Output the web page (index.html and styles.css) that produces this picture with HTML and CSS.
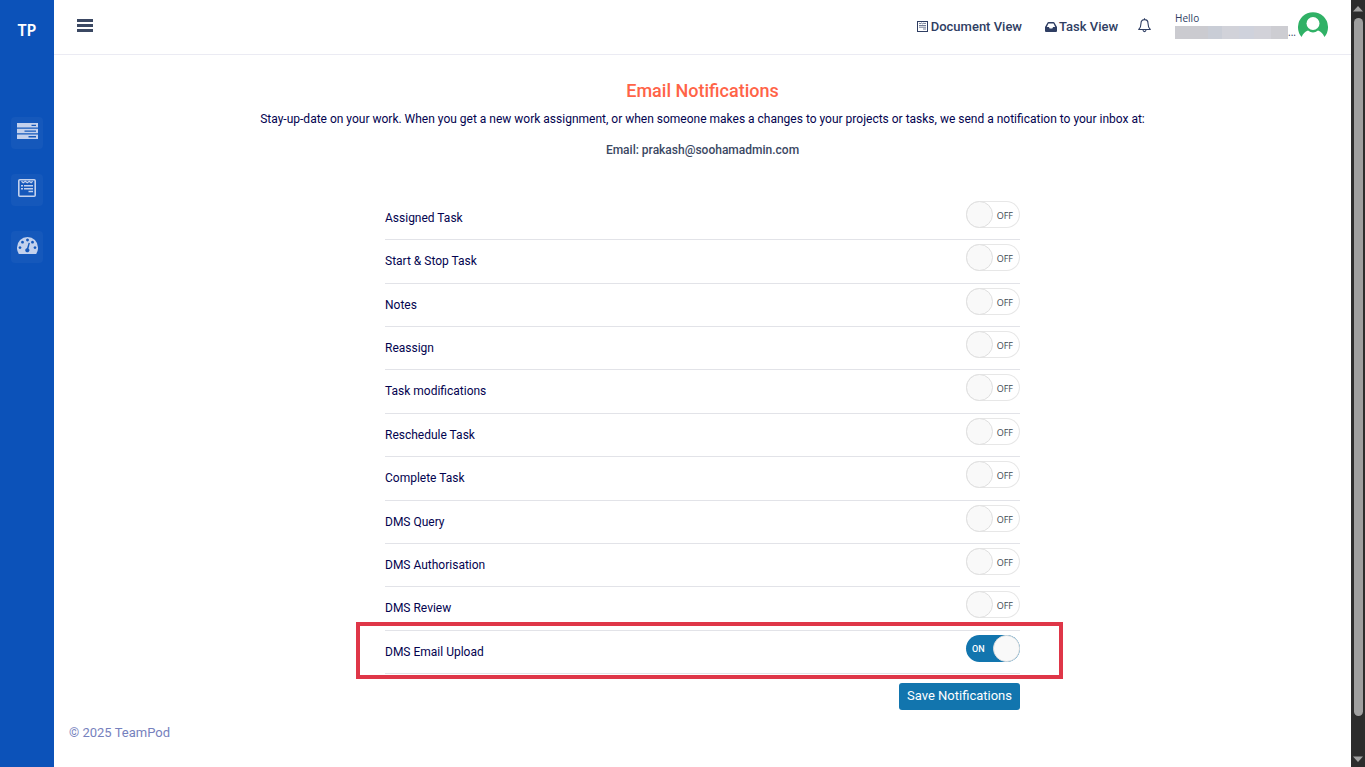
FILE: index.html
```
<!DOCTYPE html>
<html lang="en">
<head>
<meta charset="utf-8">
<meta name="viewport" content="width=device-width, initial-scale=1">
<title>Email Notifications - TeamPod</title>
<link rel="stylesheet" href="styles.css">
</head>
<body>
<div class="app">
  <nav class="sidebar" aria-label="Main">
    <a class="brand" href="#">TP</a>
    <a class="side-link" href="#" aria-label="Tasks">
      <svg width="21" height="16" viewBox="0 0 21 16" fill="currentColor" fill-rule="evenodd"><path d="M0 0h21v4.6H0zM14.500 1.800v1.200h4.500V1.800zM0 5.800h21v4.400H0zM7.500 7.400v1.300h11.500V7.400zM0 11.500h21V16H0zM11.500 13.100v1.300h7.500v-1.300z"/></svg>
    </a>
    <a class="side-link" href="#" aria-label="Documents">
      <svg width="18" height="18" viewBox="0 0 18 18" fill="none" stroke="currentColor"><rect x=".8" y=".8" width="16.400" height="16.400" rx="1" stroke-width="1.600"/><path d="M3.500 2.200l1.700 1.500 2.100-1.500 1.900 1.500 2.100-1.500 1.800 1.500 1.500-1.500" stroke-width="1.300"/><path d="M3 6.800h2m1 0h9M3 9.700h2m1 0h9M10.500 12.500H15" stroke-width="1.500"/></svg>
    </a>
    <a class="side-link" href="#" aria-label="Dashboard">
      <svg width="21" height="17" viewBox="0 0 21 17" fill="currentColor" fill-rule="evenodd"><path d="M1.800 17A10.400 10.400 0 0 1 0 10.500a10.500 10.500 0 0 1 21 0 10.400 10.400 0 0 1-1.800 6.500zM10.500 1.600a1.400 1.400 0 1 0 .01 0zM5.500 3.800a1.400 1.400 0 1 0 .01 0zM15.500 3.800a1.400 1.400 0 1 0 .01 0zM3 9.200a1.400 1.400 0 1 0 .01 0zM18 9.200a1.400 1.400 0 1 0 .01 0zM11.600 5.700L10 11.200a2.100 2.100 0 1 0 1.500.3L12.900 6z"/></svg>
    </a>
  </nav>

  <div class="page">
    <header class="topbar">
      <button class="menu-btn" type="button" aria-label="Toggle menu">
        <svg width="16" height="13" viewBox="0 0 16 13" fill="currentColor"><path d="M0 0h16v3H0zM0 5h16v3H0zM0 10h16v3H0z"/></svg>
      </button>
      <div class="top-links">
        <a class="top-link" href="#">
          <svg width="11" height="11" viewBox="0 0 11 11" fill="none" stroke="currentColor"><rect x=".5" y=".5" width="10" height="10"/><path d="M2 2l1 .8L4.500 2l1 .8L7 2l1 .8L9 2M2 4.500h7M2 6.200h7M6 8h3" stroke-width=".9" opacity=".75"/></svg>
          Document View</a>
        <a class="top-link" href="#">
          <svg width="12" height="10" viewBox="0 0 12 10" fill="currentColor" fill-rule="evenodd"><path d="M2.600.6Q2.900 0 3.500 0h5q.6 0 .9.600L12 5v4q0 1-1 1H1Q0 10 0 9V5zM3.500 1.500L1.800 5h2.100l.8 1.500h2.600L8.100 5h2.100L8.500 1.500z"/></svg>
          Task View</a>
        <button class="bell" type="button" aria-label="Alerts">
          <svg width="13" height="15" viewBox="0 0 13 15" fill="none" stroke="currentColor" stroke-width="1.100" stroke-linejoin="round"><path d="M6.500.3v1.400M6.500 1.600C4.200 1.600 3 3.200 3 5.200c0 3.500-.9 5-2.300 6.300h11.600C10.900 10.200 10 8.700 10 5.200c0-2-1.200-3.600-3.500-3.600zM5 12q.2 1.600 1.500 1.600T8 12"/></svg>
        </button>
        <div class="user">
          <span>Hello</span>
          <span class="user-name"><span class="redacted"></span>...</span>
        </div>
        <a class="avatar" href="#" aria-label="Profile">
          <svg width="30" height="26" viewBox="0 0 30 26"><path fill="#30b166" d="M3.600 25A15 15 0 1 1 26.400 25Q24.500 20 20 18.500Q15 22.500 10 18.500Q5.500 20 3.600 25z"/><circle cx="15" cy="11.500" r="6.500" fill="#fff"/></svg>
        </a>
      </div>
    </header>

    <main class="content">
      <h1>Email Notifications</h1>
      <p class="intro">Stay-up-date on your work. When you get a new work assignment, or when someone makes a changes to your projects or tasks, we send a notification to your inbox at:</p>
      <p class="email">Email: prakash@soohamadmin.com</p>
      <form class="settings">
        <div class="rows">
          <div class="row"><label for="n1">Assigned Task</label><span class="switch"><input type="checkbox" id="n1"><span class="state">OFF</span></span></div>
          <div class="row"><label for="n2">Start &amp; Stop Task</label><span class="switch"><input type="checkbox" id="n2"><span class="state">OFF</span></span></div>
          <div class="row"><label for="n3">Notes</label><span class="switch"><input type="checkbox" id="n3"><span class="state">OFF</span></span></div>
          <div class="row"><label for="n4">Reassign</label><span class="switch"><input type="checkbox" id="n4"><span class="state">OFF</span></span></div>
          <div class="row"><label for="n5">Task modifications</label><span class="switch"><input type="checkbox" id="n5"><span class="state">OFF</span></span></div>
          <div class="row"><label for="n6">Reschedule Task</label><span class="switch"><input type="checkbox" id="n6"><span class="state">OFF</span></span></div>
          <div class="row"><label for="n7">Complete Task</label><span class="switch"><input type="checkbox" id="n7"><span class="state">OFF</span></span></div>
          <div class="row"><label for="n8">DMS Query</label><span class="switch"><input type="checkbox" id="n8"><span class="state">OFF</span></span></div>
          <div class="row"><label for="n9">DMS Authorisation</label><span class="switch"><input type="checkbox" id="n9"><span class="state">OFF</span></span></div>
          <div class="row"><label for="n10">DMS Review</label><span class="switch"><input type="checkbox" id="n10"><span class="state">OFF</span></span></div>
          <div class="row highlighted"><label for="n11">DMS Email Upload</label><span class="switch"><input type="checkbox" id="n11" checked><span class="state on">ON</span></span></div>
        </div>
        <button class="save" type="button">Save Notifications</button>
      </form>
    </main>
    <footer class="footer">© 2025 TeamPod</footer>
  </div>

  <div class="scrollbar" aria-hidden="true">
    <svg width="10" height="6" viewBox="0 0 10 6"><path fill="#9f9f9f" d="M5 0l5 5.500H0z"/></svg>
    <div class="thumb-track"><div class="thumb"></div></div>
    <svg width="10" height="6" viewBox="0 0 10 6"><path fill="#9f9f9f" d="M0 .5h10L5 6z"/></svg>
  </div>
</div>
</body>
</html>
```
FILE: styles.css
```
*, *::before, *::after { box-sizing: border-box; }

body {
  margin: 0;
  font-family: Roboto, "Liberation Sans", sans-serif;
  font-size: 12px;
  line-height: 18px;
  color: #03034f;
  background: #fff;
}

a { color: inherit; text-decoration: none; }
button { font: inherit; color: inherit; border: 0; padding: 0; background: none; cursor: pointer; }
svg { display: block; flex: none; }

.app { display: flex; min-height: 100vh; }

.sidebar {
  flex: 0 0 54px;
  display: flex;
  flex-direction: column;
  align-items: center;
  padding-top: 20px;
  background: #0c52b9;
}
.brand {
  margin-bottom: 77px;
  font: 600 16px/20px "Noto Sans", sans-serif;
  color: #fff;
}
.side-link {
  display: flex;
  align-items: center;
  justify-content: center;
  width: 32px;
  height: 32px;
  margin-bottom: 25px;
  border-radius: 4px;
  background: #1558bb;
  color: #c3d1ed;
}
.side-link svg { margin-bottom: 4px; }

.page { flex: 1; min-width: 0; display: flex; flex-direction: column; }

.topbar {
  display: flex;
  align-items: center;
  justify-content: space-between;
  height: 55px;
  padding: 0 23px 3px;
  border-bottom: 1px solid #ebebf3;
  color: #2f3e63;
}
.menu-btn { color: #3b4863; }
.top-links { display: flex; align-items: center; }
.top-link {
  display: flex;
  align-items: center;
  gap: 3px;
  margin-right: 23px;
  padding-top: 2px;
  font-size: 13px;
  font-weight: 500;
}
.top-link + .top-link { margin-right: 20px; gap: 2px; }
.bell { margin-right: 24px; }
.user {
  display: flex;
  flex-direction: column;
  margin-bottom: 2px;
  font: 10px/14px "Open Sans", sans-serif;
}
.user-name { display: flex; align-items: flex-end; }
.redacted {
  width: 113px;
  height: 13px;
  background: linear-gradient(90deg, #cbcbd0 0 29%, #c9cdd6 29% 42%, #d1d2d9 42% 57%, #cfd2dc 57% 70%, #d2d2d9 70% 85%, #cdcdd2 85%);
}
.avatar { margin-left: 2px; margin-bottom: 1px; }

.content { padding: 26px 20px 0; text-align: center; }
h1 {
  margin: 0 0 9px;
  font-size: 18px;
  line-height: 20px;
  font-weight: 500;
  color: #ff6347;
}
.intro { margin: 0 0 13px; }
.email { margin: 0 0 38px; font-weight: 500; color: #3b4863; }

.settings {
  display: flex;
  flex-direction: column;
  max-width: 635px;
  margin: 0 auto;
}
.rows {
  display: grid;
  grid-auto-rows: 1fr;
  min-height: 477px;
}
.row {
  position: relative;
  display: flex;
  align-items: flex-start;
  justify-content: space-between;
  padding: 4px 0;
  border-bottom: 1px solid #e2e3e8;
}
.row label { padding-top: 8px; }
.highlighted::after {
  content: "";
  position: absolute;
  inset: -9px -43px -6px -29px;
  border: 4px solid #df3648;
  pointer-events: none;
}

.switch { position: relative; width: 54px; height: 27px; }
.switch input {
  appearance: none;
  display: flex;
  width: 100%;
  height: 100%;
  margin: 0;
  border-radius: 14px;
  background: #fff;
  box-shadow: inset 0 0 0 1px #e7e7e7;
  cursor: pointer;
}
.switch input::before {
  content: "";
  width: 27px;
  height: 27px;
  border: 1px solid #dfdfdf;
  border-radius: 50%;
  background: #f9f9f9;
}
.switch input:checked { justify-content: flex-end; background: #1275ae; box-shadow: none; }
.state {
  position: absolute;
  top: 1px;
  right: 7px;
  font: 9px/28px "Open Sans", sans-serif;
  color: #3d4852;
  pointer-events: none;
}
.state.on { top: 0; right: auto; left: 6px; font-family: Roboto, sans-serif; font-weight: 500; color: #fff; }

.save {
  align-self: flex-end;
  margin-top: 9px;
  padding: 4px 8px 5px;
  border-radius: 3px;
  background: #1275ae;
  color: #fff;
  font-size: 13px;
}
.footer { padding: 14px 15px; font-size: 13px; color: #7681bd; }

.scrollbar {
  flex: 0 0 14px;
  display: flex;
  flex-direction: column;
  align-items: center;
  padding: 6px 0 5px;
  background: #2c2c2c;
}
.thumb-track { flex: 1; width: 9px; margin: 6px 0 7px; }
.thumb { height: 95.5%; border-radius: 5px; background: #9f9f9f; }
```
